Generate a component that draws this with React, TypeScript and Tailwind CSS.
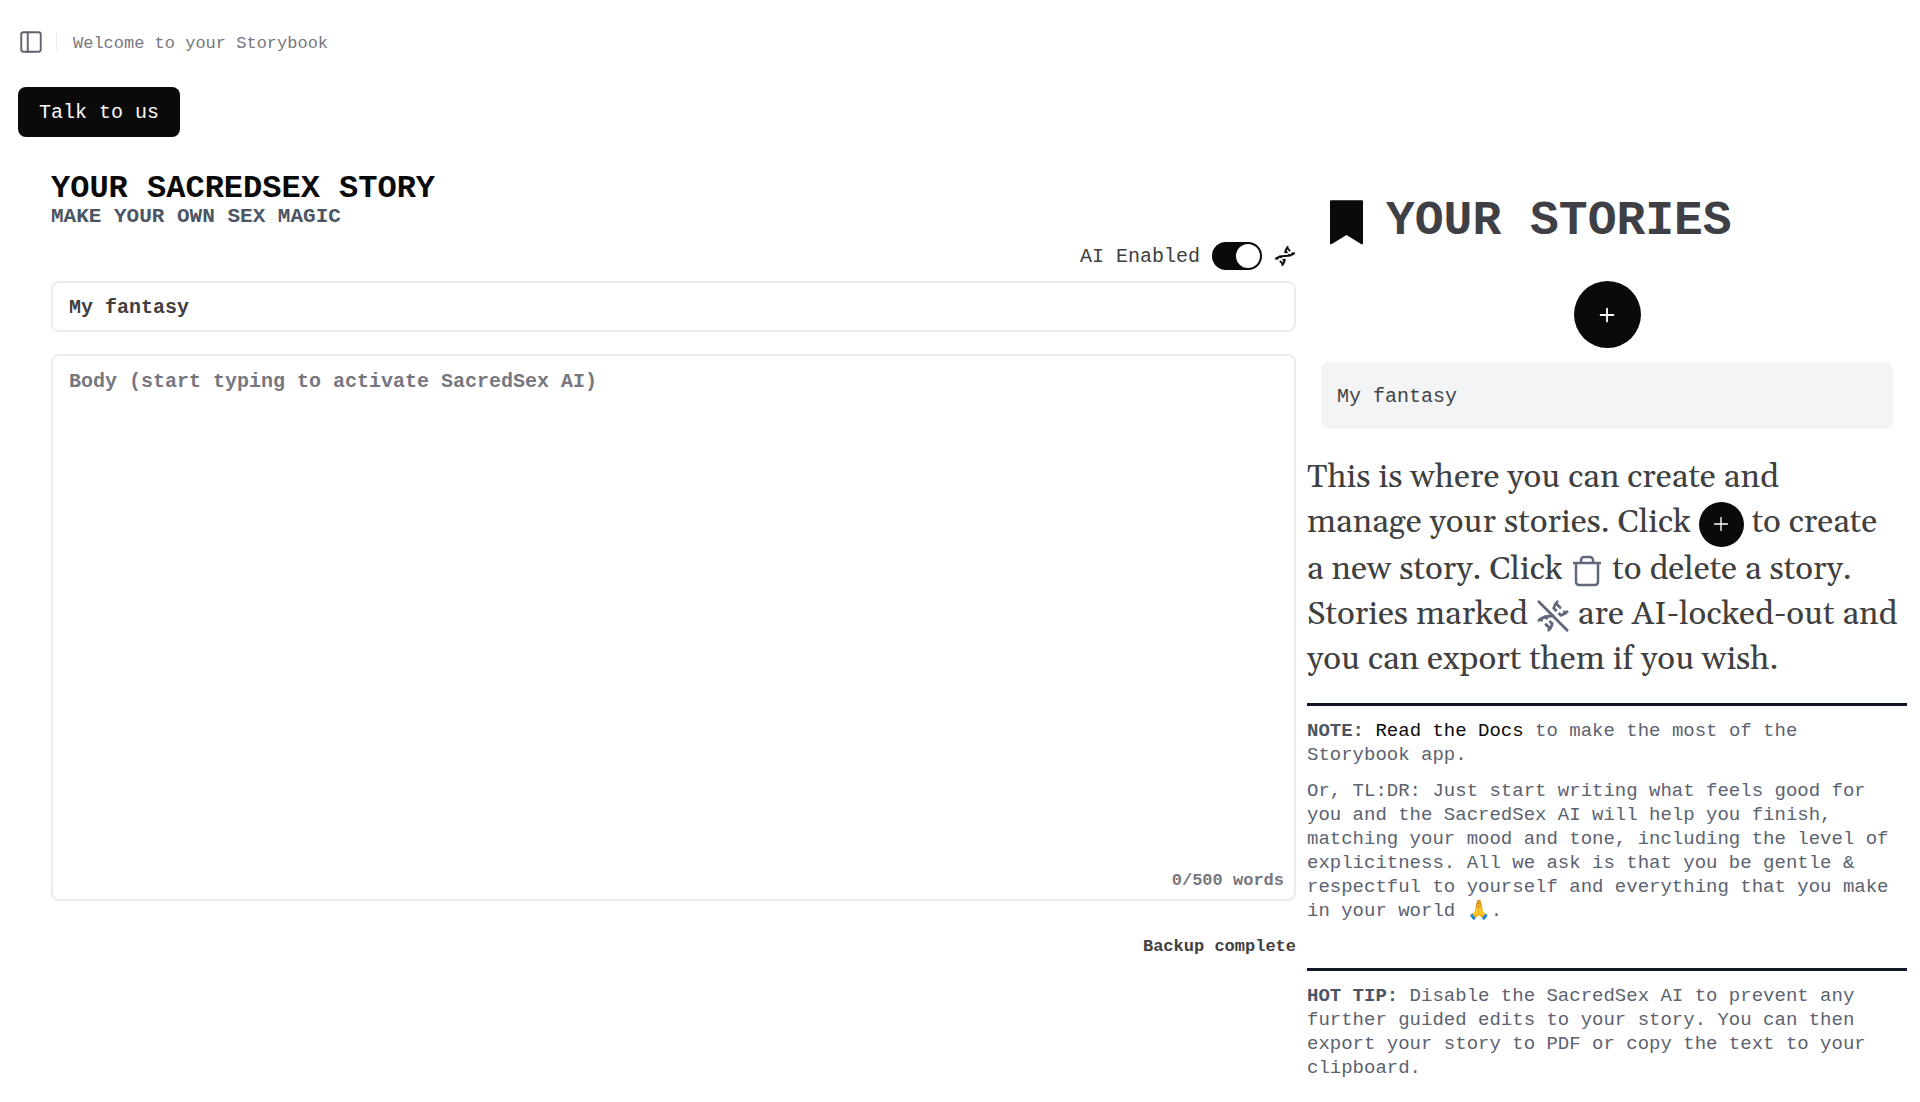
import { useState, type SVGProps } from 'react';
import { Dna, DnaOff, PanelLeft, Plus } from 'lucide-react';

const mono = "font-['Liberation_Mono',monospace]";
const serif = "font-['Gelasio','Georgia','Liberation_Serif',serif]";

export default function App() {
  const [aiEnabled, setAiEnabled] = useState(true);
  const [title, setTitle] = useState('My fantasy');
  const [body, setBody] = useState('');
  const words = body.split(/\s+/).filter(Boolean).length;

  return (
    <div className={`${mono} min-h-screen bg-white text-[#0a0a0a]`}>
      <header className="mb-[3px] flex h-[84px] items-center px-[18px]">
        <button type="button" aria-label="Toggle sidebar" className="text-[#62626f]">
          <PanelLeft size={26} strokeWidth={1.75} />
        </button>
        <span className="ml-3 h-5 w-px bg-[#efefef]" />
        <p className="ml-4 pt-1 text-[17px] text-[#77777f]">Welcome to your Storybook</p>
      </header>

      <div className="px-[18px]">
        <a
          href="#contact"
          className="inline-flex h-[50px] items-center rounded-lg bg-[#0a0a0a] px-[21px] pt-[2px] text-[20px] text-[#fafafa]"
        >
          Talk to us
        </a>
      </div>

      <main className="flex pr-[13px]">
        <section className="ml-[51px] mt-[34px] min-w-0 flex-1">
          <h1 className="text-[32px] font-bold leading-9">YOUR SACREDSEX STORY</h1>
          <h2 className="text-[21px] font-bold leading-5 text-[#4b5563]">MAKE YOUR OWN SEX MAGIC</h2>

          <div className="mt-[10px] flex h-[38px] items-center justify-end">
            <label htmlFor="ai-toggle" className="pt-[2px] text-[20px] text-[#404040]">
              AI Enabled
            </label>
            <button
              id="ai-toggle"
              type="button"
              role="switch"
              aria-checked={aiEnabled}
              onClick={() => setAiEnabled(!aiEnabled)}
              className={`ml-3 flex h-7 w-[50px] items-center rounded-full p-[2px] ${aiEnabled ? 'justify-end bg-[#0a0a0a]' : 'justify-start bg-gray-300'}`}
            >
              <span className="size-6 rounded-full bg-white" />
            </button>
            <Dna size={22} className="ml-3" />
          </div>

          <input
            aria-label="Title"
            value={title}
            onChange={(e) => setTitle(e.target.value)}
            className="mt-[6px] block h-[51px] w-full rounded-lg border-2 border-[#ececec] px-4 pt-[2px] text-[20px] font-bold text-[#404040] outline-none"
          />

          <div className="relative mt-[22px]">
            <textarea
              aria-label="Body"
              value={body}
              onChange={(e) => setBody(e.target.value)}
              placeholder="Body (start typing to activate SacredSex AI)"
              className="block h-[547px] w-full resize-none rounded-lg border-2 border-[#ececec] px-4 py-3 text-[20px] font-bold leading-7 text-[#404040] outline-none placeholder:text-[#77777f]"
            />
            <span className="absolute bottom-2 right-3 text-[17px] font-bold text-[#77777f]">{words}/500 words</span>
          </div>

          <p className="mt-[33px] text-right text-[17px] font-bold text-[#404040]">Backup complete</p>
        </section>

        <aside className="ml-[11px] mt-[54px] w-[600px] shrink-0">
          <h2 className="flex items-center text-[48px] font-bold leading-[60px] text-[#3f3f46]">
            <BookmarkIcon className="ml-3 mr-[12px] size-[55px] text-[#0a0a0a]" />
            YOUR STORIES
          </h2>

          <div className="mt-[30px] flex justify-center">
            <button
              type="button"
              aria-label="New story"
              className="flex size-[67px] items-center justify-center rounded-full bg-[#0a0a0a] text-white"
            >
              <Plus size={22} strokeWidth={2} />
            </button>
          </div>

          <a
            href="#my-fantasy"
            className="mx-[14px] mt-[14px] flex h-[67px] items-center rounded-lg bg-[#f3f4f6] px-4 pt-[2px] text-[20px] text-[#444444]"
          >
            My fantasy
          </a>

          <p className={`${serif} mt-[26px] text-[33px] leading-[45px] text-[#404040]`}>
            This is where you can create and
            <br />
            manage your stories. Click{' '}
            <span className="inline-flex size-[45px] items-center justify-center rounded-full bg-[#0a0a0a] align-middle text-white">
              <Plus size={22} strokeWidth={1.5} />
            </span>{' '}
            to create
            <br />a new story. Click <TrashIcon className="mx-[3px] inline h-8 w-7 text-[#62687c]" /> to delete a story.
            <br />
            Stories marked <DnaOff size={34} className="inline text-[#62687c]" /> are AI-locked-out and
            <br />
            you can export them if you wish.
          </p>

          <div className="mt-[21px] border-t-[3px] border-[#111827] pt-[13px] text-[19px] leading-6 text-[#5b6270]">
            <p>
              <strong className="text-[#4b5563]">NOTE:</strong>{' '}
              <a href="#docs" className="text-[#0a0a0a]">
                Read the Docs
              </a>{' '}
              to make the most of the Storybook app.
            </p>
            <p className="mt-3">
              Or, TL:DR: Just start writing what feels good for you and the SacredSex AI will help you finish, matching
              your mood and tone, including the level of explicitness. All we ask is that you be gentle &amp;
              respectful to yourself and everything that you make in your world 🙏.
            </p>
          </div>

          <div className="mt-[45px] border-t-[3px] border-[#111827] pt-[13px] text-[19px] leading-6 text-[#5b6270]">
            <p>
              <strong className="text-[#4b5563]">HOT TIP:</strong> Disable the SacredSex AI to prevent any further
              guided edits to your story. You can then export your story to PDF or copy the text to your clipboard.
            </p>
          </div>
        </aside>
      </main>
    </div>
  );
}

function BookmarkIcon(props: SVGProps<SVGSVGElement>) {
  return (
    <svg viewBox="0 0 15 15" fill="currentColor" aria-hidden {...props}>
      <path d="M3.3 1.7h8.4a.3.3 0 0 1 .3.3v11.4c0 .3-.2.4-.4.3L7.5 11.2l-4.1 2.500c-.2.1-.4 0-.4-.3V2a.3.3 0 0 1 .3-.3Z" />
    </svg>
  );
}

function TrashIcon(props: SVGProps<SVGSVGElement>) {
  return (
    <svg viewBox="0 0 28 32" fill="none" stroke="currentColor" strokeWidth="2.5" aria-hidden {...props}>
      <path d="M0 8h28M8 8V5a3 3 0 0 1 3-3h6a3 3 0 0 1 3 3v3M3 8v19a3 3 0 0 0 3 3h16a3 3 0 0 0 3-3V8" />
    </svg>
  );
}
